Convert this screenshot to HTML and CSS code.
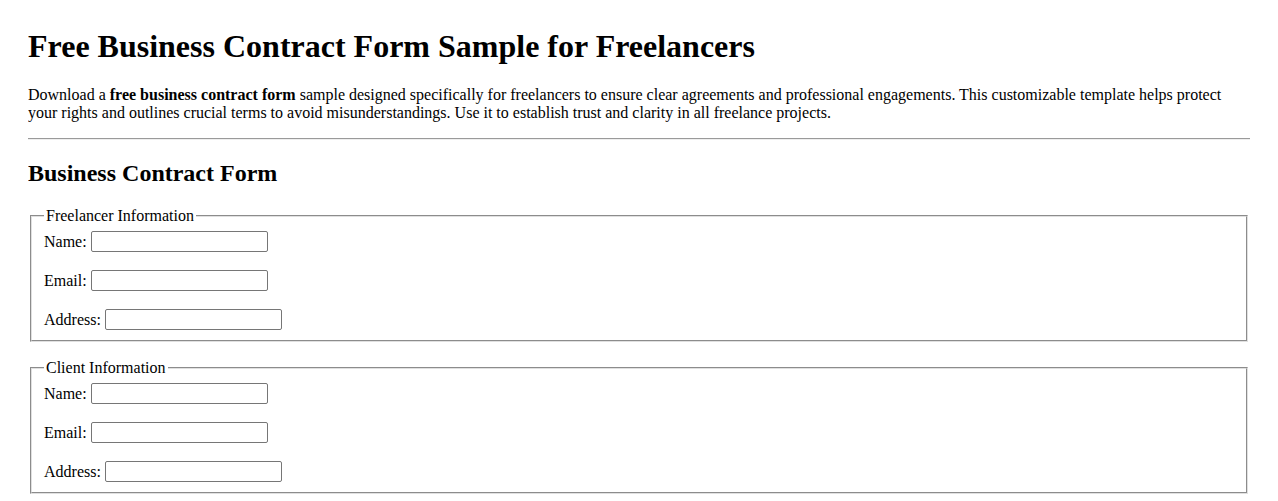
FILE: index.html
```html
<!doctype html>
<html>
<head>
	<meta charset='utf-8'>
	<title>Free Business Contract Form Sample for Freelancers</title>

	<link rel="stylesheet" href="styles.css">
</head>
<body>

	<h1>Free Business Contract Form Sample for Freelancers</h1>

	<p>Download a <strong>free business contract form</strong> sample designed specifically for freelancers to ensure clear agreements and professional engagements. This customizable template helps protect your rights and outlines crucial terms to avoid misunderstandings. Use it to establish trust and clarity in all freelance projects.</p>

	<hr>

	<h2>Business Contract Form</h2>

	<form class='contract-form'>
		<fieldset>
			<legend>Freelancer Information</legend>
			<div class='field'>
				<label for='freelancer-name'>Name:</label>
				<input type='text' id='freelancer-name'>
			</div>
			<div class='field'>
				<label for='freelancer-email'>Email:</label>
				<input type='email' id='freelancer-email'>
			</div>
			<div class='field'>
				<label for='freelancer-address'>Address:</label>
				<input type='text' id='freelancer-address'>
			</div>
		</fieldset>

		<fieldset>
			<legend>Client Information</legend>
			<div class='field'>
				<label for='client-name'>Name:</label>
				<input type='text' id='client-name'>
			</div>
			<div class='field'>
				<label for='client-email'>Email:</label>
				<input type='email' id='client-email'>
			</div>
			<div class='field'>
				<label for='client-address'>Address:</label>
				<input type='text' id='client-address'>
			</div>
		</fieldset>
	</form>

</body>
</html>
```

FILE: styles.css
```css
body {
	margin: 28px;
	font-family: "Liberation Serif", "Times New Roman", serif;
	font-size: 16px;
	color: #000;
	background: #fff;
}

h1 {
	font-size: 32px;
	margin: 0 0 21px;
}

p {
	margin: 0 0 16px;
	line-height: 18px;
}

hr {
	border: 0;
	border-top: 1px solid #9a9a9a;
	border-bottom: 1px solid #eee;
	margin: 0;
}

h2 {
	font-size: 24px;
	margin: 20px 0;
}

/* the form sections */
fieldset {
	margin: 0 2px 17px;
	padding: 6px 12px 10px;
	border: 2px groove #e0e0e0;
}

legend {
	padding: 0 2px;
	line-height: 18px;
}

/* one label + input per row */
.field {
	display: flex;
	align-items: center;
	gap: 4px;
}

.field + .field {
	margin-top: 18px;
}

.field input {
	box-sizing: border-box;
	width: 177px;
	height: 21px;
	padding: 1px 2px;
	border: 1px solid #767676;
	border-radius: 2px;
	font: 13px Arial, "Liberation Sans", sans-serif;
}
```
